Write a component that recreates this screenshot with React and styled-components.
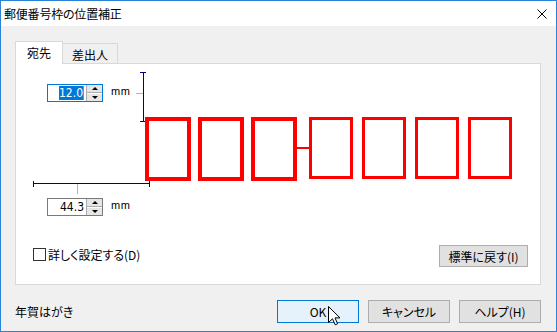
import React from "react";
import styled, { createGlobalStyle, css } from "styled-components";

const Global = createGlobalStyle`
  html, body { margin: 0; padding: 0; overflow: hidden; background: #f0f0f0; }
  body {
    font-family: "Noto Sans CJK JP", "Noto Sans", sans-serif;
    font-size: 12px;
    color: #000;
    font-feature-settings: "palt";
  }
  * { box-sizing: border-box; }
`;

const Window = styled.div`
  width: 557px;
  height: 332px;
  border: 1px solid #2b83d8;
  background: #f0f0f0;
  display: flex;
  flex-direction: column;
`;

const TitleBar = styled.div`
  height: 25px;
  flex: none;
  background: #fff;
  display: flex;
  align-items: center;
  padding-left: 3px;
  font-size: 12px;
`;

const TitleText = styled.span`
  flex: 1;
  letter-spacing: -0.2px;
`;

const CloseIcon = styled.svg`
  width: 10px;
  height: 10px;
  margin-right: 9px;
  margin-top: 1px;
`;

const Body = styled.div`
  flex: 1;
  display: flex;
  flex-direction: column;
  padding: 15px 15px 0 14px;
`;

const TabRow = styled.div`
  display: flex;
  align-items: flex-end;
  height: 22px;
  position: relative;
  z-index: 1;
`;

const Tab = styled.div`
  display: flex;
  align-items: center;
  justify-content: center;
  border: 1px solid #d9d9d9;
  border-bottom: none;
  font-size: 12px;
  ${(p) =>
    p.$active
      ? css`
          width: 48px;
          height: 23px;
          margin-bottom: -1px;
          background: #fff;
          padding-bottom: 2px;
          z-index: 2;
        `
      : css`
          width: 56px;
          height: 20px;
          margin-left: -1px;
          background: #f0f0f0;
          padding-top: 1px;
        `}
`;

const Panel = styled.div`
  height: 222px;
  border: 1px solid #d9d9d9;
  background: #fff;
  display: flex;
  flex-direction: column;
`;

const Stage = styled.div`
  position: relative;
  height: 181px;
  flex: none;
`;

const Diagram = styled.svg`
  position: absolute;
  left: 0;
  top: 0;
  width: 524px;
  height: 181px;
  overflow: visible;
`;

const SpinGroup = styled.div`
  position: absolute;
  left: 31px;
  top: ${(p) => p.$top}px;
  display: flex;
  align-items: center;
`;

const SpinBox = styled.div`
  width: 56px;
  height: 18px;
  border: 1px solid ${(p) => (p.$focused ? "#0078d7" : "#7a7a7a")};
  background: #fff;
  display: flex;
`;

const SpinValue = styled.div`
  flex: 1;
  display: flex;
  align-items: center;
  justify-content: flex-end;
  padding-right: 2px;
  font-family: "Liberation Sans Narrow", "DejaVu Sans Condensed", "Liberation Sans", sans-serif;
  font-stretch: condensed;
  font-size: 12px;
  line-height: 1;
`;

const Selected = styled.span`
  background: #0078d7;
  color: #fff;
  padding: 1px 0;
  border-right: 1px solid #f07800;
`;

const SpinButtons = styled.div`
  width: 16px;
  display: flex;
  flex-direction: column;
  gap: 1px;
  padding: 0 0 0 0;
  border-left: 1px solid #adadad;
`;

const SpinButton = styled.div`
  flex: 1;
  background: #e6e6e6;
  display: flex;
  align-items: center;
  justify-content: center;
  border-bottom: ${(p) => (p.$up ? "1px solid #adadad" : "none")};
`;

const Arrow = styled.span`
  width: 0;
  height: 0;
  border-left: 3px solid transparent;
  border-right: 3px solid transparent;
  ${(p) =>
    p.$up
      ? css`border-bottom: 3px solid #000;`
      : css`border-top: 3px solid #000;`}
`;

const Unit = styled.span`
  margin-left: 8px;
  margin-top: -4px;
  font-family: "Liberation Sans", sans-serif;
  font-size: 11px;
  letter-spacing: 0.5px;
`;

const BottomRow = styled.div`
  height: 22px;
  display: flex;
  align-items: center;
  justify-content: space-between;
  padding: 0 12px 0 17px;
`;

const CheckLabel = styled.label`
  display: flex;
  align-items: center;
  gap: 2px;
  margin-top: -3px;
  font-size: 12px;
`;

const CheckBox = styled.span`
  width: 13px;
  height: 13px;
  border: 1px solid #333;
  background: #fff;
  display: inline-block;
`;

const Button = styled.div`
  position: relative;
  width: ${(p) => p.$w || 82}px;
  height: ${(p) => p.$h || 23}px;
  border: 1px solid ${(p) => (p.$default ? "#0078d7" : "#adadad")};
  background: ${(p) => (p.$default ? "#e5f1fb" : "#e1e1e1")};
  display: flex;
  align-items: center;
  justify-content: center;
  font-size: 12px;
  flex: none;
`;

const Footer = styled.div`
  margin-top: 15px;
  height: 23px;
  display: flex;
  align-items: center;
  gap: 9px;
`;

const Caption = styled.span`
  flex: 1;
  font-size: 12px;
  margin-top: -1px;
`;

const Cursor = styled.svg`
  position: absolute;
  left: 50px;
  top: 5px;
  width: 13px;
  height: 20px;
  overflow: visible;
`;

const RED = "#ff0000";
const NAVY = "#000080";
const LEADER = "#b4b4b4";

function PostalDiagram() {
  const thick = [131, 184, 237];
  const thin = [294.5, 347.5, 400.5, 453.5];
  return (
    <Diagram viewBox="0 0 524 181">
      {/* vertical dimension */}
      <line x1="127.5" y1="8" x2="127.5" y2="58" stroke={NAVY} strokeWidth="1" />
      <line x1="124" y1="8.5" x2="130" y2="8.5" stroke={NAVY} strokeWidth="1" />
      <line x1="124" y1="57.5" x2="131" y2="57.5" stroke={NAVY} strokeWidth="1" />
      <line x1="120" y1="29.5" x2="127" y2="29.5" stroke={LEADER} strokeWidth="1" />
      {/* horizontal dimension */}
      <line x1="17" y1="119.5" x2="134" y2="119.5" stroke={NAVY} strokeWidth="1" />
      <line x1="17.5" y1="117" x2="17.5" y2="123" stroke={NAVY} strokeWidth="1" />
      <line x1="133.5" y1="117" x2="133.5" y2="123" stroke={NAVY} strokeWidth="1" />
      <line x1="61.5" y1="120" x2="61.5" y2="130" stroke={LEADER} strokeWidth="1" />
      {/* postal code frames */}
      {thick.map((x) => (
        <rect key={x} x={x} y="55" width="42" height="60" fill="none" stroke={RED} strokeWidth="4" />
      ))}
      <line x1="281" y1="84" x2="294" y2="84" stroke={RED} strokeWidth="2" />
      {thin.map((x) => (
        <rect key={x} x={x} y="54.5" width="41" height="59" fill="none" stroke={RED} strokeWidth="3" />
      ))}
    </Diagram>
  );
}

function Spin({ top, value, focused }) {
  return (
    <SpinGroup $top={top}>
      <SpinBox $focused={focused}>
        <SpinValue>{focused ? <Selected>{value}</Selected> : value}</SpinValue>
        <SpinButtons>
          <SpinButton $up>
            <Arrow $up />
          </SpinButton>
          <SpinButton>
            <Arrow />
          </SpinButton>
        </SpinButtons>
      </SpinBox>
      <Unit>mm</Unit>
    </SpinGroup>
  );
}

export default function App() {
  return (
    <>
      <Global />
      <Window>
        <TitleBar>
          <TitleText>郵便番号枠の位置補正</TitleText>
          <CloseIcon viewBox="0 0 10 10">
            <path d="M0.5 0.5 L9.5 9.5 M9.5 0.5 L0.5 9.5" stroke="#000" strokeWidth="1" fill="none" />
          </CloseIcon>
        </TitleBar>
        <Body>
          <TabRow>
            <Tab $active>宛先</Tab>
            <Tab>差出人</Tab>
          </TabRow>
          <Panel>
            <Stage>
              <PostalDiagram />
              <Spin top={20} value="12.0" focused />
              <Spin top={134} value="44.3" />
            </Stage>
            <BottomRow>
              <CheckLabel>
                <CheckBox />
                詳しく設定する(D)
              </CheckLabel>
              <Button $w={89} $h={22}>標準に戻す(I)</Button>
            </BottomRow>
          </Panel>
          <Footer>
            <Caption>年賀はがき</Caption>
            <Button $default>
              OK
              <Cursor viewBox="0 0 13 20">
                <path
                  d="M0.5 0.5 L0.5 16.5 L4.5 12.8 L7.2 18.8 L9.6 17.8 L7 11.9 L12 11.9 Z"
                  fill="#fff"
                  stroke="#000"
                  strokeWidth="1"
                  strokeLinejoin="miter"
                />
              </Cursor>
            </Button>
            <Button>キャンセル</Button>
            <Button>ヘルプ(H)</Button>
          </Footer>
        </Body>
      </Window>
    </>
  );
}
